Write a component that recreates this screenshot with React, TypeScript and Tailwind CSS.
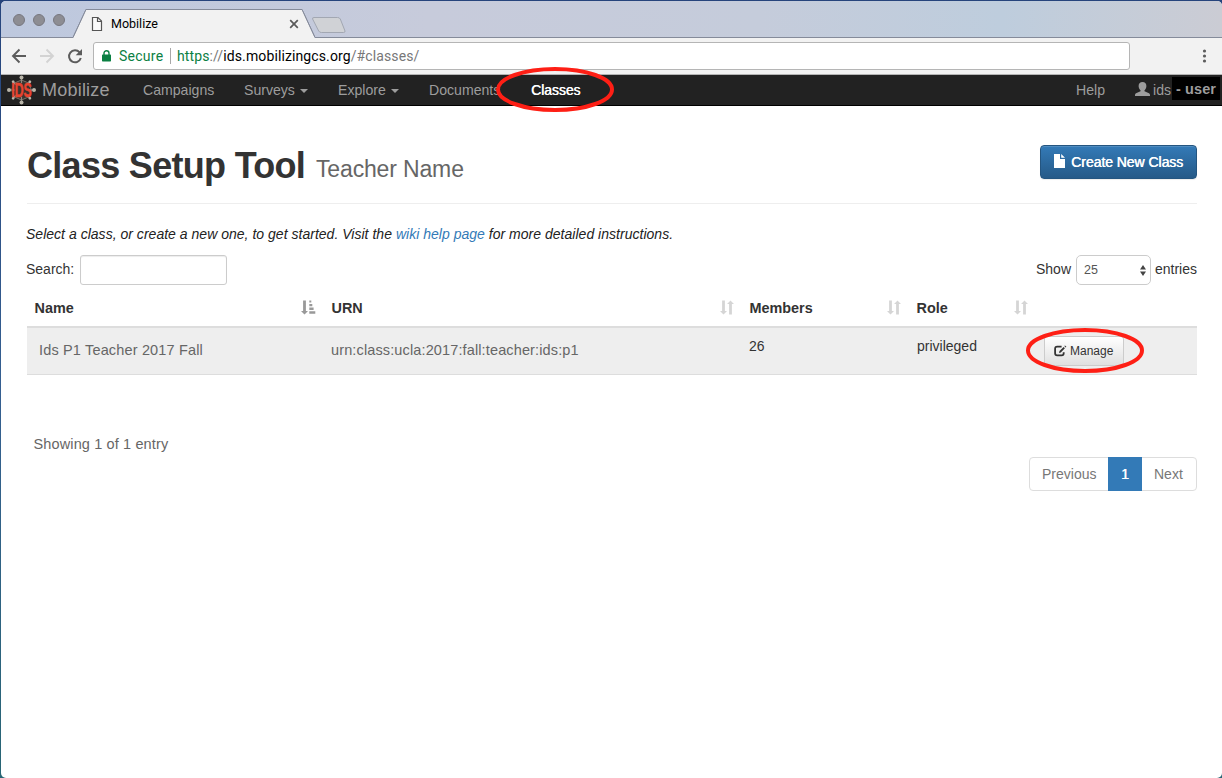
import type { ReactNode } from "react";

function BrandLogo() {
  const spokes = [0, 45, 90, 135, 180, 225, 270, 315];
  return (
    <svg width="30" height="30" viewBox="-15.5 -15 30 30" className="shrink-0 overflow-visible">
      <polygon points="0,-10 7,-7 10,0 7,7 0,10 -7,7 -10,0 -7,-7" fill="#39342f" stroke="#77726a" strokeWidth="1" />
      {spokes.map((a) => (
        <g key={a} transform={`rotate(${a})`}>
          <path d="M0 -7V-12" stroke="#8d887f" strokeWidth="1.2" />
          <circle cx="0" cy={a % 90 === 0 ? -12.5 : -11.8} r={a % 90 === 0 ? 2 : 1.4} fill="#b9b5a9" />
        </g>
      ))}
      <text transform="scale(.6 1)" x="0" y="7.3" textAnchor="middle" fontSize="20.5" fontWeight="700" fill="#e8432e" stroke="#e8432e" strokeWidth="0.5" fontFamily="Liberation Sans, sans-serif">IDS</text>
    </svg>
  );
}

function Caret() {
  return (
    <svg width="8" height="4" viewBox="0 0 8 4" className="ml-[5px] mt-[2px]">
      <path d="M0 0H8L4 4Z" fill="#9d9d9d" />
    </svg>
  );
}

function SortBoth() {
  return (
    <svg width="14" height="15" viewBox="0 0 14 15" fill="#d5d5d5">
      <path d="M2.1 0.5H4.9V11H7L3.5 14.6 0 11H2.1Z" />
      <path d="M9.1 14.6H11.9V4.1H14L10.5 0.5 7 4.1H9.1Z" />
    </svg>
  );
}

function SortAsc() {
  return (
    <svg width="15" height="15" viewBox="0 0 15 15" fill="#999">
      <path d="M2.1 0.5H4.9V11H7L3.5 14.6 0 11H2.1Z" />
      <path d="M8.3 0.5H10.3V2.5H8.3ZM8.3 4H11.3V6.2H8.3ZM8.3 7.6H12.6V9.9H8.3ZM8.3 11.3H14.3V13.7H8.3Z" />
    </svg>
  );
}

function Header({ children, icon }: { children?: ReactNode; icon?: ReactNode }) {
  return (
    <div className="flex items-center justify-between pl-[7.5px] pr-[8px]">
      <span className="pt-[2px] text-[14.4px] font-bold text-[#333]">{children}</span>
      {icon}
    </div>
  );
}

function TabStrip() {
  return (
    <div className="relative flex h-[37px] shrink-0 items-start bg-[#c6cbdb]">
      <svg width="1221" height="37" viewBox="1 1 1221 37" className="absolute left-0 top-0">
        <defs>
          <linearGradient id="sky" x1="0" x2="1" y1="0" y2="0">
            <stop offset="0" stopColor="#bdc8de" />
            <stop offset="0.35" stopColor="#c7cbdb" />
            <stop offset="0.62" stopColor="#c5ccdb" />
            <stop offset="0.82" stopColor="#becddd" />
            <stop offset="1" stopColor="#cbccd4" />
          </linearGradient>
        </defs>
        <rect x="1" y="1" width="1221" height="37" fill="url(#sky)" />
        <path d="M0 37.5H73L86 9.5H302L315 37.5H1222" fill="none" stroke="#858b9a" />
        <path d="M73 38.5L86 10H302L315 38.5Z" fill="#f2f2f2" />
        <path d="M73 37.5L86 9.5H302L315 37.5" fill="none" stroke="#858b9a" />
        <path d="M314 17.5H337.5Q339.5 17.5 340.3 19L345 31Q345.3 32.5 343.5 32.5H321.5Q319.5 32.5 318.7 31L312.6 19Q312.2 17.5 314 17.5Z" fill="#d0d2d6" stroke="#a2a7b2" />
        <g fill="#8d8d93" stroke="#77777f">
          <circle cx="19" cy="20" r="5.5" />
          <circle cx="39" cy="20" r="5.5" />
          <circle cx="59" cy="20" r="5.5" />
        </g>
        <path d="M92.5 17.5H98L101.5 21V30.5H92.5ZM97.5 17.5V21.5H101.5" fill="#fafafa" stroke="#555" strokeWidth="1.2" />
        <path d="M290.2 20.2L297.8 27.8M297.8 20.2L290.2 27.8" stroke="#5a5a5a" strokeWidth="1.7" />
      </svg>
      <span className="relative ml-[110px] mt-[13px] font-['Roboto',sans-serif] text-[12.5px] leading-[20px] text-black">Mobilize</span>
    </div>
  );
}

function Toolbar() {
  return (
    <div className="flex h-[37px] shrink-0 items-center border-b border-[#b4b4b4] bg-[#f2f2f2]">
      <svg width="92" height="36" viewBox="1 38 92 36" fill="none" className="shrink-0">
        <path d="M26 56H13.5M19.5 49.5L13 56L19.5 62.5" stroke="#5c5c5c" strokeWidth="1.9" />
        <path d="M40 56H52.5M46.5 49.5L53 56L46.5 62.5" stroke="#d3d3d3" strokeWidth="1.9" />
        <path d="M79.6 52.4A6 6 0 1 0 80.8 58" stroke="#5c5c5c" strokeWidth="2" />
        <path d="M82 49V55.3H75.7Z" fill="#5c5c5c" />
      </svg>
      <div className="flex h-[28px] w-[1037px] shrink-0 items-center rounded-[3px] border border-[#b5b5b5] bg-white font-['Roboto',sans-serif] text-[14px] tracking-[0.11px]">
        <svg width="9" height="12" viewBox="0 0 9 12" className="ml-[8px]">
          <rect y="4.5" width="9" height="7" rx="0.7" fill="#0b8043" />
          <path d="M2 5V3.2A2.5 2.5 0 0 1 7 3.2V5" fill="none" stroke="#0b8043" strokeWidth="1.4" />
        </svg>
        <span className="ml-[8px] w-[45px] whitespace-nowrap tracking-[0.25px] text-[#0b8043]">Secure</span>
        <span className="ml-[6px] mr-[6px] h-[16px] w-px bg-[#a8a8a8]" />
        <span className="whitespace-nowrap text-black">
          <span className="text-[#0b8043]">https</span>
          <span className="text-[#777]">://</span>ids.mobilizingcs.org<span className="text-[#777]">/#classes/</span>
        </span>
      </div>
      <svg width="5" height="16" viewBox="0 0 5 16" fill="#5c5c5c" className="ml-[71.5px]">
        <circle cx="2.5" cy="3" r="1.6" />
        <circle cx="2.5" cy="8" r="1.6" />
        <circle cx="2.5" cy="13" r="1.6" />
      </svg>
    </div>
  );
}

function Navbar() {
  return (
    <nav className="relative flex h-[31px] shrink-0 items-center border-b border-black bg-[#222] text-[14.1px] text-[#9d9d9d]">
      <div className="flex w-[142px] items-center pl-[5px]">
        <BrandLogo />
        <span className="ml-[6px] text-[18px] leading-[20px] tracking-[0.22px]">Mobilize</span>
      </div>
      <div className="w-[101px] pt-px">Campaigns</div>
      <div className="flex w-[94px] items-center pt-px">Surveys<Caret /></div>
      <div className="flex w-[91px] items-center pt-px">Explore<Caret /></div>
      <div className="w-[102px] pt-px">Documents</div>
      <div className="w-[545px] pt-px text-[13.9px] text-white [text-shadow:0.4px_0_0_#fff]">Classes</div>
      <div className="w-[59px] pt-px">Help</div>
      <svg width="15" height="14" viewBox="0 0 15 14" fill="#9d9d9d" className="mb-[2px] shrink-0">
        <path d="M7.5 0C9.8 0 11.4 1.6 11.4 3.9C11.4 5.8 10.5 7.3 9.5 8.2V9.3L14 11.3C14.7 11.7 15 12.2 15 13V14H0V13C0 12.2 .3 11.7 1 11.3L5.5 9.3V8.2C4.5 7.3 3.6 5.8 3.6 3.9C3.6 1.6 5.2 0 7.5 0Z" />
      </svg>
      <span className="ml-[3px] w-[19px] pt-px">ids</span>
      <span className="mt-[-3px] flex h-[23px] w-[48px] shrink-0 items-center justify-center whitespace-nowrap bg-black pt-[2px] text-[14.5px] font-bold tracking-[0.1px]">- user</span>
      <svg width="120" height="48" viewBox="0 0 120 48" className="absolute left-[494px] top-[-9px]">
        <ellipse cx="60" cy="23.5" rx="57" ry="20.5" fill="none" stroke="#fe1f15" strokeWidth="4" />
      </svg>
    </nav>
  );
}

export default function App() {
  return (
    <div className="h-[778px] w-[1222px] overflow-hidden bg-linear-to-b from-[#26447c] via-[#355f91] to-[#286574] pl-px pt-px font-['Liberation_Sans',Arial,sans-serif] text-[#333]">
      <div className="flex h-[777px] w-[1221px] flex-col overflow-hidden rounded-[5px] bg-white">
        <TabStrip />
        <Toolbar />
        <Navbar />
        <main className="flex flex-col pl-[26px] pr-[25px] text-[14px]">
          <header className="flex h-[98px] items-start justify-between border-b border-[#eee]">
            <h1 className="mt-[40px] flex items-baseline whitespace-nowrap leading-[40px]">
              <span className="w-[289px] text-[36px] font-bold tracking-[-0.7px]">Class Setup Tool</span>
              <span className="relative -top-px text-[23px] tracking-[-0.15px] text-[#666]">Teacher Name</span>
            </h1>
            <button className="mt-[39px] flex h-[34px] w-[157px] items-center rounded-[4px] border border-[#245580] bg-linear-to-b from-[#337ab7] to-[#265a88] pl-[13px] text-[14px] text-white shadow-[inset_0_1px_0_rgba(255,255,255,.15),0_1px_1px_rgba(0,0,0,.075)] [text-shadow:0.5px_0_0_#fff]">
              <svg width="11" height="14" viewBox="0 0 11 14" fill="#fff" className="mb-[3px]">
                <path d="M0 0H6V5H11V14H0ZM7.2 0L11 3.8H7.2Z" />
              </svg>
              <span className="ml-[6px] whitespace-nowrap pt-px tracking-[-0.05px]">Create New Class</span>
            </button>
          </header>
          <p className="-ml-px mt-[20px] whitespace-nowrap leading-[20px] italic tracking-[0.02px] text-[#222]">
            Select a class, or create a new one, to get started. Visit the <a className="text-[#337ab7]">wiki help page</a> for more detailed instructions.
          </p>
          <div className="mt-[11px] flex h-[30px] items-center justify-between">
            <label className="flex items-center">
              <span className="-ml-px w-[54px] pb-[2px]">Search:</span>
              <input className="h-[30px] w-[147px] rounded-[3px] border border-[#ccc] shadow-[inset_0_1px_1px_rgba(0,0,0,.075)]" />
            </label>
            <div className="flex items-center">
              <span className="w-[40px] pb-[2px]">Show</span>
              <div className="flex h-[30px] w-[75px] items-center justify-between rounded-[5px] border border-[#ccc] pl-[7px] pr-[4px] text-[12.5px] text-[#555]">
                25
                <svg width="6" height="11" viewBox="0 0 6 11" fill="#444">
                  <path d="M0 4.5L3 0L6 4.5ZM0 6.5H6L3 11Z" />
                </svg>
              </div>
              <span className="ml-[4px] w-[42px] pb-[2px]">entries</span>
            </div>
          </div>
          <div className="grid h-[43px] grid-cols-[297px_418px_167px_127px_161px] items-stretch border-b-2 border-[#ddd] pt-[4px]">
            <Header icon={<SortAsc />}>Name</Header>
            <Header icon={<SortBoth />}>URN</Header>
            <Header icon={<SortBoth />}>Members</Header>
            <Header icon={<SortBoth />}>Role</Header>
            <Header />
          </div>
          <div className="grid h-[47px] grid-cols-[297px_418px_167px_127px_161px] border-b border-[#ddd] bg-[#eee] leading-[20px]">
            <div className="pl-[12px] pt-[12px] text-[14.5px] tracking-[0.16px] text-[#666]">Ids P1 Teacher 2017 Fall</div>
            <div className="pl-[7px] pt-[12px] text-[14.5px] tracking-[0.13px] text-[#666]">urn:class:ucla:2017:fall:teacher:ids:p1</div>
            <div className="pl-[7px] pt-[8px]">26</div>
            <div className="pl-[8px] pt-[8px]">privileged</div>
            <div className="relative pl-[8px] pt-[8px]">
              <button className="flex h-[30px] w-[80px] items-center rounded-[3px] border border-[#ccc] bg-linear-to-b from-white to-[#e0e0e0] pl-[9px] text-[12px]">
                <svg width="13" height="12" viewBox="0 0 13 12" className="mb-px shrink-0">
                  <path d="M7.6 1.7H3.2Q1.1 1.7 1.1 3.8V8.3Q1.1 10.4 3.2 10.4H7.6Q9.7 10.4 9.7 8.3V7.2" fill="none" stroke="#333" strokeWidth="1.8" />
                  <path d="M5 8L5.5 6.1L9.6 2L10.9 3.3L6.8 7.4ZM10.3 1.1L11 .4L12.4 1.8L11.7 2.5Z" fill="#333" />
                </svg>
                <span className="ml-[3px]">Manage</span>
              </button>
              <svg width="122" height="48" viewBox="0 0 122 48" className="absolute left-[-12px] top-[-1px]">
                <ellipse cx="61" cy="23.5" rx="57" ry="20.5" fill="none" stroke="#fe1f15" strokeWidth="4" />
              </svg>
            </div>
          </div>
          <div className="mt-[59px] pl-[6.5px] text-[14.5px] leading-[20px] tracking-[0.13px] text-[#666]">Showing 1 of 1 entry</div>
          <div className="mt-[3px] flex h-[34px] w-[168px] items-stretch self-end whitespace-nowrap rounded-[4px] border border-[#ddd] leading-[32px] text-[#777]">
            <span className="w-[78px] pl-[12px]">Previous</span>
            <span className="my-[-1px] w-[34px] bg-[#337ab7] text-center leading-[34px] text-white [text-shadow:0.4px_0_0_#fff]">1</span>
            <span className="pl-[12px]">Next</span>
          </div>
        </main>
      </div>
    </div>
  );
}
